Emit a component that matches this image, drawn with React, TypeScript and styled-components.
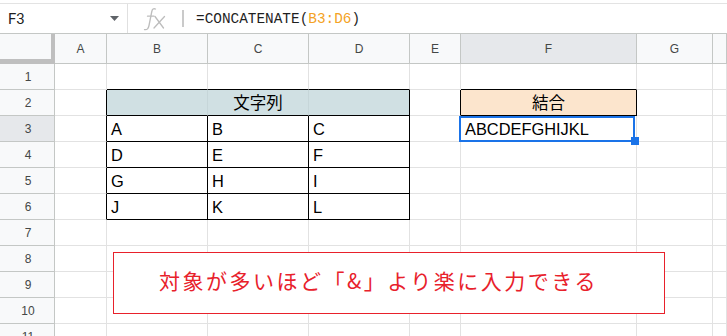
import React from "react";
import styled, { createGlobalStyle, css } from "styled-components";

const GlobalStyle = createGlobalStyle`
  html, body { margin: 0; padding: 0; background: #ffffff; overflow: hidden; }
  * { box-sizing: border-box; }
`;

const LATIN = `"Liberation Sans", Arial, sans-serif`;
const CJK = `"Liberation Sans", "Noto Sans CJK JP", sans-serif`;
const GRID = "#e2e2e2";
const HDR_LINE = "#c4c7c5";
const BLACK = "#000000";

const Page = styled.div`
  position: relative;
  width: 727px;
  height: 336px;
  overflow: hidden;
  background: #fff;
`;

const TopStrip = styled.div`
  height: 3px;
  background: #fff;
`;

const FormulaBar = styled.div`
  display: flex;
  align-items: stretch;
  height: 31px;
  border-top: 1px solid #e3e3e3;
  border-bottom: 1px solid ${HDR_LINE};
`;

const NameBox = styled.div`
  width: 128px;
  display: flex;
  align-items: center;
  justify-content: space-between;
  padding: 0 8px 0 8px;
  border-right: 1px solid #e0e0e0;
  font-family: Roboto, ${LATIN};
  font-size: 15px;
  color: #1f1f1f;
`;

const FxArea = styled.div`
  display: flex;
  align-items: center;
  padding-left: 14px;
`;

const Divider = styled.span`
  display: block;
  width: 2px;
  height: 17px;
  background: #cacaca;
  margin-left: 16px;
`;

const FormulaText = styled.div`
  display: flex;
  align-items: center;
  padding-left: 12px;
  font-family: "Liberation Mono", "DejaVu Sans Mono", monospace;
  font-size: 14.4px;
  color: #1f1f1f;
`;

const RangeRef = styled.span`
  color: #f4a224;
`;

const Sheet = styled.div`
  display: grid;
  grid-template-columns: 55px 52px 101px 101px 101px 51px 176px 76px 1fr;
  grid-template-rows: 30px repeat(11, 26px);
`;

const Corner = styled.div`
  background: #f8f9fa;
  border-right: 4px solid #bfbfbf;
  border-bottom: 5px solid #bfbfbf;
`;

const ColHeader = styled.div<{ $active?: boolean }>`
  display: flex;
  align-items: center;
  justify-content: center;
  background: ${(p) => (p.$active ? "#e6e8eb" : "#f8f9fa")};
  border-right: 1px solid ${HDR_LINE};
  border-bottom: 1px solid ${HDR_LINE};
  font-family: ${LATIN};
  font-size: 12px;
  color: #444746;
  padding-top: 1px;
`;

const RowHeader = styled.div<{ $active?: boolean }>`
  display: flex;
  align-items: center;
  justify-content: center;
  background: ${(p) => (p.$active ? "#e6e8eb" : "#f8f9fa")};
  border-right: 1px solid ${HDR_LINE};
  border-bottom: 1px solid ${HDR_LINE};
  font-family: ${LATIN};
  font-size: 12px;
  color: #444746;
  padding-left: 2px;
`;

const Cell = styled.div<{
  $fill?: string;
  $right: string;
  $bottom: string;
  $center?: boolean;
  $cjk?: boolean;
  $raised?: boolean;
}>`
  position: relative;
  display: flex;
  align-items: flex-end;
  justify-content: ${(p) => (p.$center ? "center" : "flex-start")};
  padding: 0 4px 2px 4px;
  background: ${(p) => p.$fill || "#ffffff"};
  border-right: 1px solid ${(p) => p.$right};
  border-bottom: 1px solid ${(p) => p.$bottom};
  font-family: ${LATIN};
  font-size: 16.4px;
  line-height: 19px;
  color: #000;
  white-space: nowrap;
  ${(p) =>
    p.$cjk &&
    css`
      font-family: ${CJK};
      font-size: 16.5px;
      padding-bottom: 2px;
    `}
  ${(p) =>
    p.$raised &&
    css`
      z-index: 3;
    `}
`;

const Selection = styled.div`
  position: absolute;
  left: -2px;
  top: 0;
  right: 1px;
  bottom: -1px;
  border: 2px solid #1a73e8;
  pointer-events: none;
`;

const FillHandle = styled.div`
  position: absolute;
  left: 170px;
  top: 21px;
  width: 8px;
  height: 8px;
  background: #1a73e8;
`;

const Callout = styled.div`
  position: absolute;
  left: 113px;
  top: 252px;
  width: 552px;
  height: 62px;
  border: 1px solid #e8212b;
  background: #ffffff;
  display: flex;
  align-items: center;
  padding: 0 0 7px 45px;
  font-family: "Noto Sans CJK JP", sans-serif;
  font-size: 21px;
  letter-spacing: 2.5px;
  color: #e8212b;
  white-space: nowrap;
`;

const COLS = ["A", "B", "C", "D", "E", "F", "G", "H"];
const ROWS = [1, 2, 3, 4, 5, 6, 7, 8, 9, 10, 11];

type CellInfo = { text?: string; center?: boolean; cjk?: boolean; fill?: string };

const CONTENT: Record<string, CellInfo> = {
  B2: { fill: "#d0e0e3" },
  C2: { text: "文字列", center: true, cjk: true, fill: "#d0e0e3" },
  D2: { fill: "#d0e0e3" },
  B3: { text: "A" },
  C3: { text: "B" },
  D3: { text: "C" },
  B4: { text: "D" },
  C4: { text: "E" },
  D4: { text: "F" },
  B5: { text: "G" },
  C5: { text: "H" },
  D5: { text: "I" },
  B6: { text: "J" },
  C6: { text: "K" },
  D6: { text: "L" },
  F2: { text: "結合", center: true, cjk: true, fill: "#fce5cd" },
  F3: { text: "ABCDEFGHIJKL" },
};

const inTable = (r: number, c: number) =>
  (r >= 2 && r <= 6 && c >= 1 && c <= 3) || (r === 2 && c === 5);

const rightColor = (r: number, c: number) => {
  if (r === 2 && (c === 1 || c === 2)) return "#c6d6d9";
  return inTable(r, c) || inTable(r, c + 1) ? BLACK : GRID;
};

const bottomColor = (r: number, c: number) =>
  inTable(r, c) || inTable(r + 1, c) ? BLACK : GRID;

const FxIcon = () => (
  <svg width="24" height="24" viewBox="0 0 24 24" fill="none" stroke="#bdbdbd" strokeWidth="1.3" strokeLinecap="round">
    <path d="M13.5 2 C11.5 1.2 10.3 2.2 9.8 4.5 L7 18.5 C6.4 21.5 5.2 23.2 2.5 22.6" />
    <path d="M5.5 9.2 H12" />
    <path d="M13 9.5 L21.5 21" />
    <path d="M22.5 9.5 L12 21" />
  </svg>
);

const Caret = () => (
  <svg width="9" height="5" viewBox="0 0 9 5">
    <path d="M0 0 H9 L4.5 5 Z" fill="#5f6368" />
  </svg>
);

export default function App() {
  return (
    <Page>
      <GlobalStyle />
      <TopStrip />
      <FormulaBar>
        <NameBox>
          <span>F3</span>
          <Caret />
        </NameBox>
        <FxArea>
          <FxIcon />
          <Divider />
        </FxArea>
        <FormulaText>
          =CONCATENATE(<RangeRef>B3:D6</RangeRef>)
        </FormulaText>
      </FormulaBar>
      <Sheet>
        <Corner />
        {COLS.map((c) => (
          <ColHeader key={c} $active={c === "F"}>
            {c === "H" ? null : c}
          </ColHeader>
        ))}
        {ROWS.map((r) => (
          <React.Fragment key={r}>
            <RowHeader $active={r === 3}>{r}</RowHeader>
            {COLS.map((col, ci) => {
              const id = `${col}${r}`;
              const info = CONTENT[id] || {};
              const selected = id === "F3";
              return (
                <Cell
                  key={id}
                  $fill={info.fill}
                  $right={rightColor(r, ci)}
                  $bottom={bottomColor(r, ci)}
                  $center={info.center}
                  $cjk={info.cjk}
                  $raised={selected}
                >
                  {info.text}
                  {selected && (
                    <>
                      <Selection />
                      <FillHandle />
                    </>
                  )}
                </Cell>
              );
            })}
          </React.Fragment>
        ))}
      </Sheet>
      <Callout>対象が多いほど「&」より楽に入力できる</Callout>
    </Page>
  );
}
